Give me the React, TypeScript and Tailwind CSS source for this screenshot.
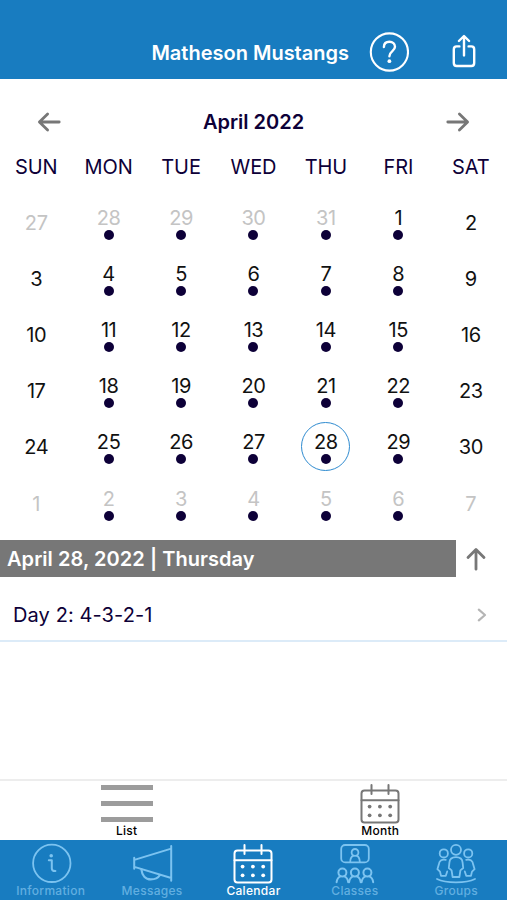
import { ReactNode } from 'react';

interface IconProps {
  className?: string;
}

function ArrowIcon({ className = '' }: IconProps) {
  return (
    <svg width="24" height="22" viewBox="0 0 24 22" fill="none" stroke="#777" strokeWidth="2.8" strokeLinecap="round" strokeLinejoin="round" className={className}>
      <path d="M1.8 11H21.4M13.4 3L21.6 11L13.4 19" />
    </svg>
  );
}

function HelpIcon() {
  return (
    <svg width="40" height="40" viewBox="0 0 40 40" fill="none" stroke="#fff" strokeWidth="2.1" strokeLinecap="round" strokeLinejoin="round">
      <circle cx="20.4" cy="20" r="18.6" />
      <path d="M14.9 15C15 11.8 17.2 9.8 20.4 9.8C23.6 9.8 26 11.8 26 14.8C26 19.2 20.4 19 20.4 24.2" strokeWidth="2.4" />
      <circle cx="20.4" cy="29.2" r="1.9" fill="#fff" stroke="none" />
    </svg>
  );
}

function ShareIcon() {
  return (
    <svg width="24" height="34" viewBox="0 0 24 34" fill="none" stroke="#fff" strokeWidth="2.4" strokeLinecap="round" strokeLinejoin="round">
      <path d="M7.4 12.4H4.6C2.6 12.4 1.8 13.4 1.8 15.4V29C1.8 31 2.6 32 4.6 32H19.4C21.4 32 22.2 31 22.2 29V15.4C22.2 13.4 21.4 12.4 19.4 12.4H16.6" />
      <path d="M12 21.4V2.4M6.9 7L12 2L17.1 7" />
    </svg>
  );
}

function TabSvg({ children }: { children: ReactNode }) {
  return (
    <svg width="44" height="42" viewBox="0 0 44 42" fill="none" stroke="currentColor" strokeWidth="1.8" strokeLinecap="round" strokeLinejoin="round">
      {children}
    </svg>
  );
}

function InfoIcon() {
  return (
    <TabSvg>
      <circle cx="22.8" cy="21.3" r="18.7" />
      <circle cx="22.2" cy="13.7" r="1.8" fill="currentColor" stroke="none" />
      <path d="M19.8 18.2H22.8V26.4C22.8 28.4 24 29 26.4 29" strokeWidth="2" />
    </TabSvg>
  );
}

function MegaphoneIcon() {
  return (
    <TabSvg>
      <path d="M41.2 4V38.8M4.2 15.8V26.8M4.4 17.9L41.2 6.6M4.4 24.9L41.2 36" strokeWidth="2" />
      <path d="M11.4 27.4C12 33.4 15.6 37.4 20.8 37.4C24.8 37.4 28.2 35.8 30 33" strokeWidth="2.2" />
    </TabSvg>
  );
}

function CalendarIcon() {
  const dotColumns = [11.6, 21.9, 32.2];
  return (
    <TabSvg>
      <g strokeWidth="2">
        <rect x="3.5" y="8.4" width="37" height="32" rx="3" />
        <path d="M3.5 18.2H40.5M13.5 3V12M30.5 3V12" />
      </g>
      {dotColumns.map((x) => (
        <g key={x} fill="currentColor" stroke="none">
          <circle cx={x} cy="24.6" r="1.9" />
          <circle cx={x} cy="33.3" r="1.9" />
        </g>
      ))}
    </TabSvg>
  );
}

function ClassesIcon() {
  return (
    <TabSvg>
      <rect x="8.2" y="3" width="27.6" height="17.4" rx="4" />
      <circle cx="22" cy="10.4" r="3.4" />
      <path d="M17.2 20C17.2 16.4 18.6 14.4 20.4 13.6M23.6 13.6C25.4 14.4 26.8 16.4 26.8 20" />
      {[9.4, 21.9, 34.4].map((x) => (
        <g key={x} strokeWidth="2">
          <circle cx={x} cy="30.6" r="4" />
          <path d={`M${x - 5.8} 40.2C${x - 5.4} 37.2 ${x - 4} 35.2 ${x - 2} 34.4M${x + 2} 34.4C${x + 4} 35.2 ${x + 5.4} 37.2 ${x + 5.8} 40.2`} />
        </g>
      ))}
    </TabSvg>
  );
}

function GroupsIcon() {
  return (
    <TabSvg>
      <circle cx="22" cy="7.8" r="5" />
      <circle cx="9.8" cy="11.4" r="4.1" />
      <circle cx="34.2" cy="11.4" r="4.1" />
      <path d="M22 15.2C18 15.2 15.6 17.2 15.4 20.6L14.8 26L17.6 28.4L18.6 35H25.4L26.4 28.4L29.2 26L28.6 20.6C28.4 17.2 26 15.2 22 15.2Z" />
      <path d="M11.8 17.8C7.4 17 5.2 19 4.8 22.6L3.4 27.2L6 29.6L7 33.8H11.8L13.2 29.4" />
      <path d="M32.2 17.8C36.6 17 38.8 19 39.2 22.6L40.6 27.2L38 29.6L37 33.8H32.2L30.8 29.4" />
      <path d="M3 37C12 41.4 32 41.4 41 37" />
    </TabSvg>
  );
}

const WEEKDAYS = ['SUN', 'MON', 'TUE', 'WED', 'THU', 'FRI', 'SAT'];

const WEEKS = [
  [27, 28, 29, 30, 31, 1, 2],
  [3, 4, 5, 6, 7, 8, 9],
  [10, 11, 12, 13, 14, 15, 16],
  [17, 18, 19, 20, 21, 22, 23],
  [24, 25, 26, 27, 28, 29, 30],
  [1, 2, 3, 4, 5, 6, 7],
];

const TABS = [
  { label: 'Information', icon: <InfoIcon /> },
  { label: 'Messages', icon: <MegaphoneIcon /> },
  { label: 'Calendar', icon: <CalendarIcon />, active: true },
  { label: 'Classes', icon: <ClassesIcon /> },
  { label: 'Groups', icon: <GroupsIcon /> },
];

interface DayCellProps {
  day: number;
  muted: boolean;
  hasEvent: boolean;
  selected: boolean;
}

function DayCell({ day, muted, hasEvent, selected }: DayCellProps) {
  return (
    <div className="flex items-center justify-center">
      <div
        className={`w-[49px] h-[49px] rounded-full border-[1.5px] flex flex-col items-center justify-center ${
          hasEvent ? 'pt-[2.5px]' : 'pt-[1.5px]'
        } ${selected ? 'border-[#2f8bd0]' : 'border-transparent'}`}
      >
        <span className={`text-[20px] leading-[22px] tracking-[-0.4px] ${muted ? 'text-[#c4c4c4]' : 'text-[#111]'}`}>{day}</span>
        {hasEvent && <span className="w-2.5 h-2.5 mt-[1px] rounded-full bg-[#0d0038]" />}
      </div>
    </div>
  );
}

export default function App() {
  return (
    <div className="w-[507px] h-[900px] flex flex-col bg-white overflow-hidden font-['Inter',sans-serif]">
      <header className="h-[79px] shrink-0 bg-[#187cc0] flex items-end justify-end pr-[31px] pb-[7px] text-white">
        <h1 className="text-[20px] leading-[38px] font-semibold mr-[20px]">Matheson Mustangs</h1>
        <HelpIcon />
        <div className="ml-[43px] pb-[4px]">
          <ShareIcon />
        </div>
      </header>

      <div className="h-[84px] shrink-0 flex items-center justify-between px-[37px] pt-[1px]">
        <ArrowIcon className="rotate-180" />
        <h2 className="text-[20px] font-semibold text-[#0d0038]">April 2022</h2>
        <ArrowIcon />
      </div>

      <div className="h-[31px] shrink-0 grid grid-cols-7 text-center text-[20px] leading-[8px] tracking-[-0.1px] text-[#0d0038]">
        {WEEKDAYS.map((name) => (
          <span key={name}>{name}</span>
        ))}
      </div>

      <div className="h-[337px] shrink-0 grid grid-cols-7 grid-rows-6">
        {WEEKS.map((week, row) =>
          week.map((day, col) => (
            <DayCell
              key={`${row}-${col}`}
              day={day}
              muted={(row === 0 && day > 7) || row === 5}
              hasEvent={col > 0 && col < 6}
              selected={row === 4 && day === 28}
            />
          ))
        )}
      </div>

      <div className="h-[37px] mt-[9px] shrink-0 flex">
        <div className="w-[456px] bg-[#777] text-white text-[20px] leading-[38px] font-semibold pl-[7px] tracking-[0.05px]">
          April 28, 2022 | Thursday
        </div>
        <div className="flex-1 flex items-center pl-[8px]">
          <ArrowIcon className="-rotate-90" />
        </div>
      </div>

      <div className="h-[65px] shrink-0 flex items-center justify-between border-b-2 border-[#dcebf8] pl-[13px] pr-[20px] pt-[13px]">
        <span className="text-[20px] tracking-[0.1px] text-[#0d0038]">Day 2: 4-3-2-1</span>
        <svg width="10" height="14" viewBox="0 0 10 14" fill="none" stroke="#b5b5b5" strokeWidth="2.2" strokeLinecap="round" strokeLinejoin="round">
          <path d="M1.8 1.6L8 7L1.8 12.4" />
        </svg>
      </div>

      <div className="flex-1" />

      <div className="h-[61px] shrink-0 grid grid-cols-2 border-t-2 border-[#ededed] text-black text-[12px] leading-[14px] font-medium tracking-[0.25px]">
        <div className="flex flex-col items-center">
          <div className="w-[52px] h-[37px] mt-1 mb-[2px] flex flex-col justify-between">
            <span className="h-[5px] bg-[#9c9c9c]" />
            <span className="h-[5px] bg-[#9c9c9c]" />
            <span className="h-[5px] bg-[#9c9c9c]" />
          </div>
          <span>List</span>
        </div>
        <div className="flex flex-col items-center">
          <span className="mt-[1px] text-[#777]">
            <CalendarIcon />
          </span>
          <span>Month</span>
        </div>
      </div>

      <nav className="h-[60px] shrink-0 grid grid-cols-5 bg-[#187cc0] pt-[2px]">
        {TABS.map(({ label, icon, active }) => (
          <div
            key={label}
            className={`flex flex-col items-center text-[12px] leading-[14px] font-medium tracking-[0.3px] ${
              active ? 'text-white' : 'text-[#7cc3f0]'
            }`}
          >
            {icon}
            <span className={active ? '' : 'text-[#62afe0]'}>{label}</span>
          </div>
        ))}
      </nav>
    </div>
  );
}
